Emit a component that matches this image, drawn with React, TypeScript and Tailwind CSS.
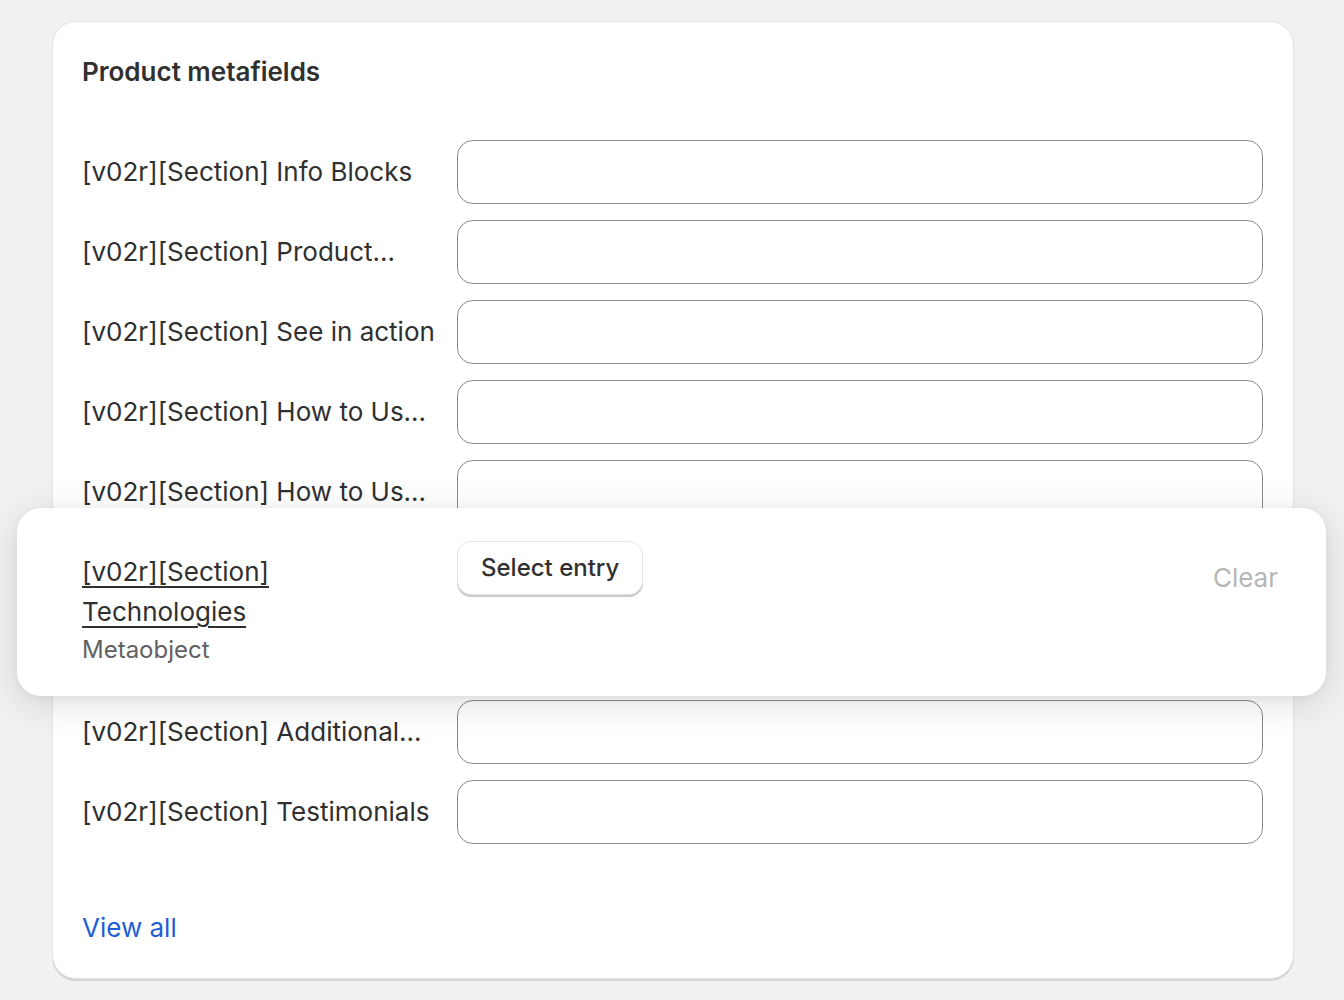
const rows = [
  "[v02r][Section] Info Blocks",
  "[v02r][Section] Product...",
  "[v02r][Section] See in action",
  "[v02r][Section] How to Us...",
  "[v02r][Section] How to Us...",
  "[v02r][Section] Technologies",
  "[v02r][Section] Features",
  "[v02r][Section] Additional...",
  "[v02r][Section] Testimonials",
];

const MetafieldRow = ({ label }: { label: string }) => (
  <div className="flex flex-row items-center gap-[20px]">
    <div className="w-[355px] shrink-0 whitespace-nowrap overflow-hidden text-[26px] leading-[40px] text-[#303030]">
      {label}
    </div>
    <div className="flex-1 h-[64px] bg-white border border-[#8a8a8a] rounded-[16px]" />
  </div>
);

export default function App() {
  return (
    <div
      className="relative w-[1344px] min-h-[1000px] bg-[#f1f1f1] pt-[21px] overflow-hidden"
      style={{ fontFamily: "Inter, 'Noto Sans', sans-serif" }}
    >
      <div className="ml-[52px] w-[1242px] bg-white rounded-[24px] border border-[#e3e3e3] shadow-[0_2px_0_0_#d4d4d4] pl-[29px] pr-[30px] pt-[30px] pb-[30px]">
        <h2 className="text-[26px] leading-[40px] font-semibold text-[#303030]">
          Product metafields
        </h2>
        <div className="flex flex-col gap-[16px] mt-[48px]">
          {rows.map((label, idx) => (
            <MetafieldRow key={idx} label={label} />
          ))}
        </div>
        <div className="mt-[64px] text-[26px] leading-[40px] text-[#1f5fd3]">
          View all
        </div>
      </div>

      {/* dragged row */}
      <div className="absolute left-[17px] top-[508px] w-[1309px] h-[188px] bg-white rounded-[24px] shadow-[0_8px_40px_rgba(0,0,0,0.12),0_2px_8px_rgba(0,0,0,0.06)] pl-[65px] pr-[48px] pt-[33px] flex flex-row items-start gap-[20px]">
        <div className="w-[355px] shrink-0 pt-[11px]">
          <div className="flex flex-col items-start text-[26px] leading-[40px] text-[#303030]">
            <span className="underline underline-offset-[5px] decoration-[2px]">
              [v02r][Section]
            </span>
            <span className="underline underline-offset-[5px] decoration-[2px]">
              Technologies
            </span>
          </div>
          <div className="text-[24px] leading-[36px] text-[#616161]">
            Metaobject
          </div>
        </div>
        <div className="flex-1 flex flex-row items-start justify-between">
          <button className="h-[54px] px-[23px] rounded-[14px] bg-white border border-[#e3e3e3] shadow-[0_2px_0_0_#c9c9c9] text-[24px] font-medium text-[#303030]">
            Select entry
          </button>
          <span className="mt-[17px] text-[26px] leading-[40px] text-[#b5b5b5]">
            Clear
          </span>
        </div>
      </div>
    </div>
  );
}
